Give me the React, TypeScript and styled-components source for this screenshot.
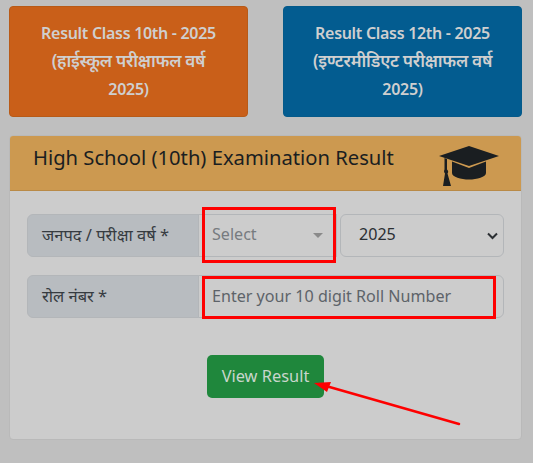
import styled, { createGlobalStyle } from 'styled-components';

const GlobalStyle = createGlobalStyle`
  html, body {
    margin: 0;
    padding: 0;
    background: #bfbfbf;
    font-family: "Noto Sans", "Open Sans", "Liberation Sans", sans-serif;
  }
`;

const Page = styled.div`
  position: relative;
  width: 533px;
  height: 463px;
  overflow: hidden;
  box-sizing: border-box;
  padding: 6px 11px 0 9px;
`;

const LinkRow = styled.div`
  display: grid;
  grid-template-columns: 1fr 1fr;
  gap: 35px;
  margin-bottom: 18px;
`;

const ResultLink = styled.a<{ $tone: 'orange' | 'blue' }>`
  display: block;
  box-sizing: border-box;
  height: 111px;
  padding: 12px 8px 0;
  border-radius: 4px;
  border: 1px solid ${p => (p.$tone === 'orange' ? '#b85a17' : '#045a8a')};
  background: ${p => (p.$tone === 'orange' ? '#c95f19' : '#035c90')};
  color: #cfcfcf;
  font-size: 16px;
  font-weight: 600;
  letter-spacing: -0.3px;
  line-height: 28px;
  text-align: center;
`;

const HindiLine = styled.span`
  font-size: 17.2px;
`;

const Card = styled.div`
  box-sizing: border-box;
  height: 305px;
  background: #cccccc;
  border: 1px solid #b9b9b9;
  border-radius: 4px;
  overflow: hidden;
`;

const CardHeader = styled.div`
  display: flex;
  justify-content: space-between;
  align-items: flex-start;
  box-sizing: border-box;
  height: 55px;
  padding: 7px 22px 0 23px;
  background: #cc9950;
  border-bottom: 1px solid #b98a47;
`;

const CardTitle = styled.h3`
  margin: 0;
  font-size: 20.2px;
  font-weight: 400;
  line-height: 28px;
  color: #1a1e21;
`;

const CapIcon = styled.svg`
  width: 60px;
  height: 42px;
  margin-top: 3px;
  fill: #1a1e21;
`;

const CardBody = styled.div`
  display: flex;
  flex-direction: column;
  gap: 18px;
  padding: 23px 17px 0;
`;

const InputGroup = styled.div`
  display: flex;
  height: 43px;
  font-size: 16.1px;
`;

const GroupLabel = styled.label`
  display: flex;
  align-items: center;
  box-sizing: border-box;
  width: 172px;
  padding: 0 0 3px 14px;
  font-size: 16.5px;
  color: #363b40;
  background: #b8bcc0;
  border: 1px solid #b3b6b9;
  border-radius: 6px 0 0 6px;
`;

const FakeSelect = styled.div`
  display: flex;
  align-items: center;
  justify-content: space-between;
  box-sizing: border-box;
  width: 139px;
  padding: 0 13px 3px 13px;
  margin-left: -1px;
  color: #777b7f;
  border: 1px solid #b3b6b9;
`;

const Caret = styled.span`
  width: 0;
  height: 0;
  margin-top: 3px;
  border-left: 5px solid transparent;
  border-right: 5px solid transparent;
  border-top: 5px solid #8a8a8a;
`;

const YearSelect = styled.div`
  display: flex;
  align-items: center;
  justify-content: space-between;
  box-sizing: border-box;
  flex: 1;
  margin-left: 3px;
  padding: 0 5px 3px 18px;
  color: #2b2f33;
  border: 1px solid #b3b6b9;
  border-radius: 6px;
`;

const Chevron = styled.svg`
  width: 11px;
  height: 8px;
  margin-top: 3px;
  fill: none;
  stroke: #2b2f33;
  stroke-width: 2;
`;

const RollInput = styled.div`
  display: flex;
  align-items: center;
  box-sizing: border-box;
  flex: 1;
  margin-left: -1px;
  padding: 0 0 2px 13px;
  color: #5d6369;
  border: 1px solid #b3b6b9;
  border-radius: 0 6px 6px 0;
`;

const SubmitRow = styled.div`
  display: flex;
  justify-content: center;
  margin-top: 19px;
`;

const SubmitButton = styled.button`
  width: 117px;
  height: 43px;
  padding: 0 0 2px;
  border: none;
  border-radius: 5px;
  background: #1f873c;
  color: #c9d6cc;
  font-family: inherit;
  font-size: 16.4px;
`;

const Highlight = styled.div<{ $left: number; $top: number; $w: number; $h: number }>`
  position: absolute;
  left: ${p => p.$left}px;
  top: ${p => p.$top}px;
  width: ${p => p.$w}px;
  height: ${p => p.$h}px;
  box-sizing: border-box;
  border: 3px solid #fe0000;
  pointer-events: none;
`;

const Arrow = styled.svg`
  position: absolute;
  left: 0;
  top: 0;
  width: 533px;
  height: 463px;
  pointer-events: none;
`;

export default function App() {
  return (
    <Page>
      <GlobalStyle />
      <LinkRow>
        <ResultLink $tone="orange">
          Result Class 10th - 2025
          <br />
          <HindiLine>(हाईस्कूल परीक्षाफल वर्ष</HindiLine>
          <br />
          2025)
        </ResultLink>
        <ResultLink $tone="blue">
          Result Class 12th - 2025
          <br />
          <HindiLine>(इण्टरमीडिएट परीक्षाफल वर्ष</HindiLine>
          <br />
          2025)
        </ResultLink>
      </LinkRow>

      <Card>
        <CardHeader>
          <CardTitle>High School (10th) Examination Result</CardTitle>
          <CapIcon viewBox="0 0 60 42">
            <path d="M30 0 60 10 30 20 0 10Z" />
            <path d="M13 15.500 30 22 47 15.500V27C47 31 38 33.500 30 33.500 22 33.500 13 31 13 27Z" />
            <path d="M5.500 12 8 13 8 23.500C9.500 24.500 9.500 26.500 8.500 27.500L12 40H4L6 27.500C4.800 26.500 4.800 24.500 5.500 23.500Z" />
          </CapIcon>
        </CardHeader>
        <CardBody>
          <InputGroup>
            <GroupLabel>जनपद / परीक्षा वर्ष *</GroupLabel>
            <FakeSelect>
              Select
              <Caret />
            </FakeSelect>
            <YearSelect>
              2025
              <Chevron viewBox="0 0 11 8">
                <path d="M1 1.500 5.500 6 10 1.500" />
              </Chevron>
            </YearSelect>
          </InputGroup>
          <InputGroup>
            <GroupLabel>रोल नंबर *</GroupLabel>
            <RollInput>Enter your 10 digit Roll Number</RollInput>
          </InputGroup>
          <SubmitRow>
            <SubmitButton>View Result</SubmitButton>
          </SubmitRow>
        </CardBody>
      </Card>

      <Highlight $left={202} $top={207} $w={134} $h={56} />
      <Highlight $left={202} $top={276} $w={294} $h={43} />
      <Arrow viewBox="0 0 533 463">
        <path d="M459 424 326 386" stroke="#fe0000" strokeWidth="2.500" strokeLinecap="round" fill="none" />
        <path d="M314 383 331 382 327 392Z" fill="#fe0000" />
      </Arrow>
    </Page>
  );
}
